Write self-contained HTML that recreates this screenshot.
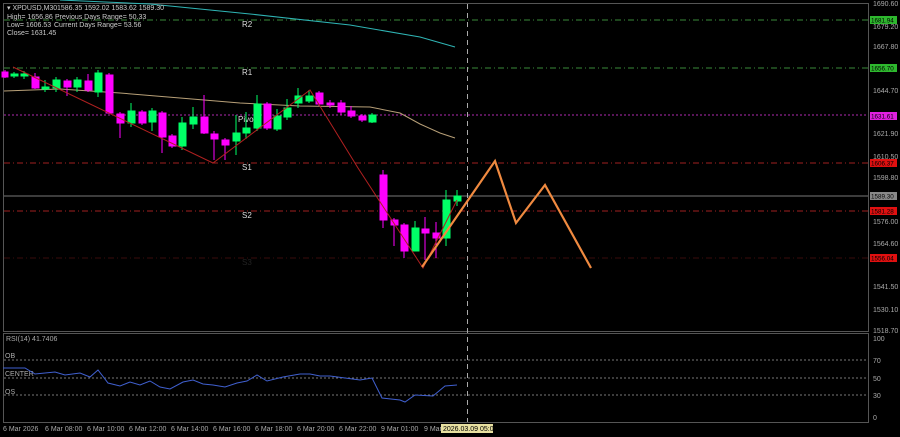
<!DOCTYPE html><html><head><meta charset="utf-8"><style>body{margin:0;background:#000;width:900px;height:437px;overflow:hidden}svg{display:block;font-family:"Liberation Sans",sans-serif}</style></head><body>
<svg width="900" height="437" viewBox="0 0 900 437">
<rect width="900" height="437" fill="#000"/>
<rect x="3.5" y="3.5" width="865" height="328" fill="none" stroke="#555" stroke-width="1"/>
<rect x="3.5" y="333.5" width="865" height="89" fill="none" stroke="#555" stroke-width="1"/>
<g stroke-width="1">
<line x1="4" y1="20" x2="868" y2="20" stroke="#3a8a3a" stroke-dasharray="6,3,1,3"/>
<line x1="4" y1="68" x2="868" y2="68" stroke="#3a8a3a" stroke-dasharray="6,3,1,3"/>
<line x1="4" y1="115" x2="868" y2="115" stroke="#b02ab0" stroke-dasharray="2,2"/>
<line x1="4" y1="163" x2="868" y2="163" stroke="#a02020" stroke-dasharray="6,3,1,3"/>
<line x1="4" y1="211" x2="868" y2="211" stroke="#a02020" stroke-dasharray="6,3,1,3"/>
<line x1="4" y1="258" x2="868" y2="258" stroke="#3a0c0c" stroke-dasharray="6,3,1,3"/>
<line x1="4" y1="196" x2="868" y2="196" stroke="#777"/>
<line x1="467.5" y1="4" x2="467.5" y2="422" stroke="#aaa" stroke-dasharray="5,4"/>
</g>
<g fill="#ddd" font-size="8">
<text x="242" y="27">R2</text><text x="242" y="75">R1</text><text x="238" y="122">Pivot</text><text x="242" y="170">S1</text><text x="242" y="218">S2</text><text x="242" y="265" fill="#222">S3</text>
</g>
<polyline fill="none" stroke="#2fb5b5" stroke-width="1" points="60,0 150,4 250,14 350,25 420,37 455,47"/>
<polyline fill="none" stroke="#b8a078" stroke-width="1" points="4,91 60,89 120,93 180,98 240,103 300,106 370,107 400,113 420,124 440,133 455,138"/>
<g stroke-width="1">
<g stroke="#ff00ff" fill="#ff00ff">
<line x1="5" y1="70" x2="5" y2="78"/><rect x="2" y="72" width="6" height="5"/>
<line x1="35" y1="73" x2="35" y2="89"/><rect x="32" y="77" width="7" height="11"/>
<line x1="67" y1="79" x2="67" y2="96"/><rect x="64" y="81" width="7" height="6"/>
<line x1="88" y1="74" x2="88" y2="92"/><rect x="85" y="81" width="7" height="9"/>
<line x1="109" y1="73" x2="109" y2="114"/><rect x="106" y="75" width="7" height="38"/>
<line x1="120" y1="112" x2="120" y2="138"/><rect x="117" y="114" width="7" height="9"/>
<line x1="142" y1="110" x2="142" y2="125"/><rect x="139" y="112" width="7" height="11"/>
<line x1="162" y1="111" x2="162" y2="153"/><rect x="159" y="113" width="7" height="24"/>
<line x1="172" y1="134" x2="172" y2="148"/><rect x="169" y="136" width="7" height="10"/>
<line x1="204" y1="95" x2="204" y2="134"/><rect x="201" y="117" width="7" height="16"/>
<line x1="214" y1="131" x2="214" y2="160"/><rect x="211" y="134" width="7" height="5"/>
<line x1="225" y1="138" x2="225" y2="160"/><rect x="222" y="140" width="7" height="5"/>
<line x1="267" y1="102" x2="267" y2="130"/><rect x="264" y="104" width="7" height="24"/>
<line x1="319" y1="91" x2="319" y2="106"/><rect x="316" y="93" width="7" height="11"/>
<line x1="330" y1="100" x2="330" y2="108"/><rect x="327" y="103" width="7" height="2"/>
<line x1="341" y1="100" x2="341" y2="115"/><rect x="338" y="103" width="7" height="9"/>
<line x1="351" y1="106" x2="351" y2="118"/><rect x="348" y="111" width="7" height="5"/>
<line x1="362" y1="114" x2="362" y2="122"/><rect x="359" y="116" width="7" height="4"/>
<line x1="383" y1="170" x2="383" y2="228"/><rect x="380" y="175" width="7" height="45"/>
<line x1="394" y1="218" x2="394" y2="246"/><rect x="391" y="220" width="7" height="5"/>
<line x1="404" y1="223" x2="404" y2="258"/><rect x="401" y="225" width="7" height="26"/>
<line x1="425" y1="217" x2="425" y2="260"/><rect x="422" y="229" width="7" height="4"/>
<line x1="436" y1="222" x2="436" y2="258"/><rect x="433" y="233" width="7" height="5"/>
</g>
<g stroke="#00ff66" fill="#00ff66">
<line x1="14" y1="72" x2="14" y2="78"/><rect x="11" y="74" width="7" height="2"/>
<line x1="24" y1="71" x2="24" y2="79"/><rect x="21" y="74" width="7" height="2"/>
<line x1="45" y1="80" x2="45" y2="92"/><rect x="42" y="87" width="7" height="2"/>
<line x1="56" y1="77" x2="56" y2="92"/><rect x="53" y="80" width="7" height="8"/>
<line x1="77" y1="77" x2="77" y2="92"/><rect x="74" y="80" width="7" height="7"/>
<line x1="98" y1="70" x2="98" y2="97"/><rect x="95" y="73" width="7" height="19"/>
<line x1="131" y1="103" x2="131" y2="127"/><rect x="128" y="111" width="7" height="12"/>
<line x1="152" y1="108" x2="152" y2="131"/><rect x="149" y="111" width="7" height="11"/>
<line x1="182" y1="117" x2="182" y2="150"/><rect x="179" y="123" width="7" height="23"/>
<line x1="193" y1="107" x2="193" y2="129"/><rect x="190" y="117" width="7" height="7"/>
<line x1="236" y1="115" x2="236" y2="155"/><rect x="233" y="133" width="7" height="8"/>
<line x1="246" y1="112" x2="246" y2="139"/><rect x="243" y="128" width="7" height="5"/>
<line x1="257" y1="95" x2="257" y2="131"/><rect x="254" y="104" width="7" height="24"/>
<line x1="277" y1="109" x2="277" y2="131"/><rect x="274" y="116" width="7" height="13"/>
<line x1="287" y1="99" x2="287" y2="120"/><rect x="284" y="108" width="7" height="9"/>
<line x1="298" y1="88" x2="298" y2="108"/><rect x="295" y="96" width="7" height="7"/>
<line x1="309" y1="90" x2="309" y2="103"/><rect x="306" y="96" width="7" height="5"/>
<line x1="372" y1="113" x2="372" y2="123"/><rect x="369" y="115" width="7" height="7"/>
<line x1="415" y1="221" x2="415" y2="251"/><rect x="412" y="228" width="7" height="23"/>
<line x1="446" y1="190" x2="446" y2="246"/><rect x="443" y="200" width="7" height="38"/>
<line x1="457" y1="190" x2="457" y2="206"/><rect x="454" y="196" width="7" height="5"/>
</g>
</g>
<polyline fill="none" stroke="#b02020" stroke-width="1" points="13,67 213,163 310,90 358,168 423,268 457,200"/>
<polyline fill="none" stroke="#f08a40" stroke-width="2.2" points="422,267 495,161 516,223 545,185 591,268"/>
<g fill="#ccc" font-size="7">
<text x="7" y="10">▾ XPDUSD,M30</text><text x="57" y="10">1586.35 1592.02 1583.62 1589.30</text>
<text x="7" y="19">High= 1656.86</text><text x="55" y="19">Previous Days Range= 50.33</text>
<text x="7" y="27">Low= 1606.53</text><text x="54" y="27">Current Days Range= 53.56</text>
<text x="7" y="35">Close= 1631.45</text>
</g>
<g font-size="7" fill="#aaa">
<text x="873" y="6">1690.60</text><text x="873" y="29">1679.20</text><text x="873" y="49">1667.80</text><text x="873" y="93">1644.70</text><text x="873" y="136">1621.90</text><text x="873" y="159">1610.50</text><text x="873" y="180">1598.80</text><text x="873" y="224">1576.00</text><text x="873" y="246">1564.60</text><text x="873" y="289">1541.50</text><text x="873" y="312">1530.10</text><text x="873" y="333">1518.70</text>
<text x="873" y="341">100</text><text x="873" y="363">70</text><text x="873" y="381">50</text><text x="873" y="398">30</text><text x="873" y="420">0</text>
</g>
<g font-size="6.3">
<rect x="870" y="16" width="27" height="8" fill="#2eb82e"/><text x="871" y="22.5" fill="#000">1681.94</text>
<rect x="870" y="64" width="27" height="8" fill="#2eb82e"/><text x="871" y="70.5" fill="#000">1656.70</text>
<rect x="870" y="112" width="27" height="8" fill="#e020e0"/><text x="871" y="118.5" fill="#000">1631.61</text>
<rect x="870" y="159" width="27" height="8" fill="#e01010"/><text x="871" y="165.5" fill="#000">1606.37</text>
<rect x="870" y="192" width="27" height="8" fill="#888"/><text x="871" y="198.5" fill="#000">1589.30</text>
<rect x="870" y="207" width="27" height="8" fill="#e01010"/><text x="871" y="213.5" fill="#000">1581.28</text>
<rect x="870" y="254" width="27" height="8" fill="#e01010"/><text x="871" y="260.5" fill="#000">1556.04</text>
</g>
<g stroke="#777" stroke-dasharray="2,2"><line x1="4" y1="360" x2="868" y2="360"/><line x1="4" y1="378" x2="868" y2="378"/><line x1="4" y1="395" x2="868" y2="395"/></g>
<g fill="#aaa" font-size="7"><text x="6" y="341">RSI(14) 41.7406</text><text x="5" y="358">OB</text><text x="5" y="376">CENTER</text><text x="5" y="394">OS</text></g>
<polyline fill="none" stroke="#4060d0" stroke-width="1" points="3,368 25,368 35,374 55,372 65,375 80,373 90,377 98,370 108,383 120,386 130,382 140,385 150,381 160,387 170,389 183,382 193,380 203,384 213,385 225,387 237,383 247,381 257,375 267,381 283,377 300,374 310,374 320,376 330,376 345,378 360,380 372,378 382,398 400,400 405,402 415,395 433,396 445,386 457,385"/>
<g fill="#aaa" font-size="7"><text x="3" y="431">6 Mar 2026</text><text x="45" y="431">6 Mar 08:00</text><text x="87" y="431">6 Mar 10:00</text><text x="129" y="431">6 Mar 12:00</text><text x="171" y="431">6 Mar 14:00</text><text x="213" y="431">6 Mar 16:00</text><text x="255" y="431">6 Mar 18:00</text><text x="297" y="431">6 Mar 20:00</text><text x="339" y="431">6 Mar 22:00</text><text x="381" y="431">9 Mar 01:00</text><text x="424" y="431">9 Mar</text></g>
<rect x="441" y="424" width="52" height="9" fill="#e8e0a0"/><text x="443" y="431" font-size="7" fill="#000">2026.03.09 05:00</text>
</svg></body></html>
